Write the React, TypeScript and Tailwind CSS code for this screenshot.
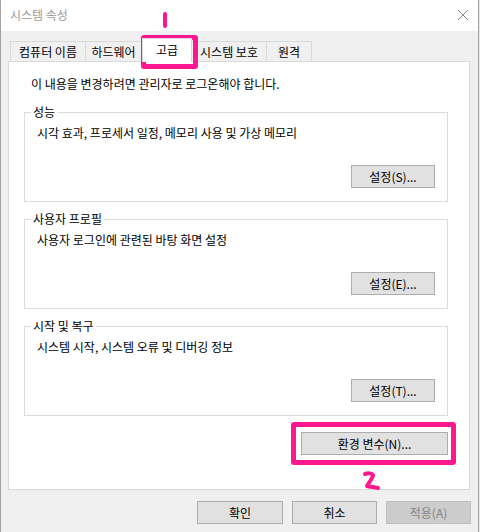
import React from 'react';

const font = "font-['Noto_Sans_CJK_KR','Noto_Sans',sans-serif]";

interface GroupProps {
  title: string;
  desc: string;
  button: string;
  className?: string;
}

function GroupBox({ title, desc, button, className }: GroupProps) {
  return (
    <div className={`relative h-[90px] w-[424px] border border-[#dcdcdc] ${className ?? ''}`}>
      <span className="absolute -top-[9px] left-[6px] bg-white px-[2px] text-[12px] leading-[16px] text-black">
        {title}
      </span>
      <div className="pl-[12px] pt-[12px] text-[12px] leading-[16px] text-black">{desc}</div>
      <div className="mt-[24px] flex justify-end pr-[12px]">
        <button className="h-[23px] w-[84px] border border-[#adadad] bg-[#e1e1e1] text-[12px] leading-[16px] text-black">
          {button}
        </button>
      </div>
    </div>
  );
}

const tabs = [
  { label: '컴퓨터 이름', w: 'w-[76px]' },
  { label: '하드웨어', w: 'w-[57px]' },
  { label: '고급', w: 'w-[50px]', active: true },
  { label: '시스템 보호', w: 'w-[76px]' },
  { label: '원격', w: 'w-[46px]' },
];

export default function App() {
  return (
    <div className={`${font} relative h-[532px] w-[480px] overflow-hidden bg-[#e8e8e8]`}>
      <div className="flex h-[532px] w-[479px] flex-col border-x border-[#a3a3a3] bg-[#f0f0f0]">
        {/* title bar */}
        <div className="flex h-[31px] shrink-0 items-start justify-between bg-white pl-[9px] pr-[9px] pt-[7px]">
          <span className="text-[12px] leading-[16px] text-[#9a9a9a]">시스템 속성</span>
          <svg width="12" height="12" viewBox="0 0 12 12" className="mt-[2px]">
            <path d="M1 1 L11 11 M11 1 L1 11" stroke="#8a8a8a" strokeWidth="1" fill="none" />
          </svg>
        </div>

        {/* tabs */}
        <div className="mt-[7px] flex h-[23px] items-end pl-[9px]">
          {tabs.map((t) =>
            t.active ? (
              <div
                key={t.label}
                className={`${t.w} relative z-10 -mb-px flex h-[24px] items-start justify-center border-x border-t border-[#d9d9d9] bg-white pt-[3px] text-[12px] leading-[16px] text-black`}
              >
                {t.label}
              </div>
            ) : (
              <div
                key={t.label}
                className={`${t.w} -ml-px flex h-[20px] items-center justify-center border-x border-t border-[#d9d9d9] bg-[#f0f0f0] text-[12px] leading-[16px] text-black first:ml-0`}
              >
                {t.label}
              </div>
            )
          )}
        </div>

        {/* panel */}
        <div className="ml-[7px] h-[429px] w-[462px] border border-[#d9d9d9] bg-white px-[15px]">
          <div className="pl-[7px] pt-[14px] text-[12px] leading-[16px] text-black">
            이 내용을 변경하려면 관리자로 로그온해야 합니다.
          </div>
          <GroupBox
            className="mt-[20px]"
            title="성능"
            desc="시각 효과, 프로세서 일정, 메모리 사용 및 가상 메모리"
            button="설정(S)..."
          />
          <GroupBox
            className="mt-[17px]"
            title="사용자 프로필"
            desc="사용자 로그인에 관련된 바탕 화면 설정"
            button="설정(E)..."
          />
          <GroupBox
            className="mt-[17px]"
            title="시작 및 복구"
            desc="시스템 시작, 시스템 오류 및 디버깅 정보"
            button="설정(T)..."
          />
          <div className="mt-[16px] flex w-[424px] justify-end">
            <button className="h-[23px] w-[147px] border border-[#adadad] bg-[#e1e1e1] text-[12px] leading-[16px] text-black">
              환경 변수(N)...
            </button>
          </div>
        </div>

        {/* bottom buttons */}
        <div className="mt-[11px] flex justify-end gap-[9px] pr-[7px]">
          <button className="h-[23px] w-[86px] border border-[#adadad] bg-[#e1e1e1] text-[12px] leading-[16px] text-black">
            확인
          </button>
          <button className="h-[23px] w-[85px] border border-[#adadad] bg-[#e1e1e1] text-[12px] leading-[16px] text-black">
            취소
          </button>
          <button className="h-[23px] w-[85px] border border-[#bfbfbf] bg-[#cccccc] text-[12px] leading-[16px] text-[#838383]">
            적용(A)
          </button>
        </div>
      </div>

      {/* annotations */}
      <div className="absolute left-[163px] top-[12px] h-[16px] w-[4px] rounded-full bg-[#ff178f]" />
      <div className="absolute left-[141px] top-[35px] h-[34px] w-[57px] rounded-[3px] border-[5px] border-[#ff178f]" />
      <div className="absolute left-[291px] top-[422px] h-[43px] w-[165px] rounded-[3px] border-[5px] border-[#ff178f]" />
      <svg className="absolute left-[360px] top-[469px]" width="24" height="24" viewBox="0 0 24 24">
        <path
          d="M5 5 C8 4 12 4 13 6 C13 9 9 13 7 17 C10 18 15 18 18 19"
          stroke="#ff178f"
          strokeWidth="4"
          strokeLinecap="round"
          strokeLinejoin="round"
          fill="none"
        />
      </svg>
    </div>
  );
}
